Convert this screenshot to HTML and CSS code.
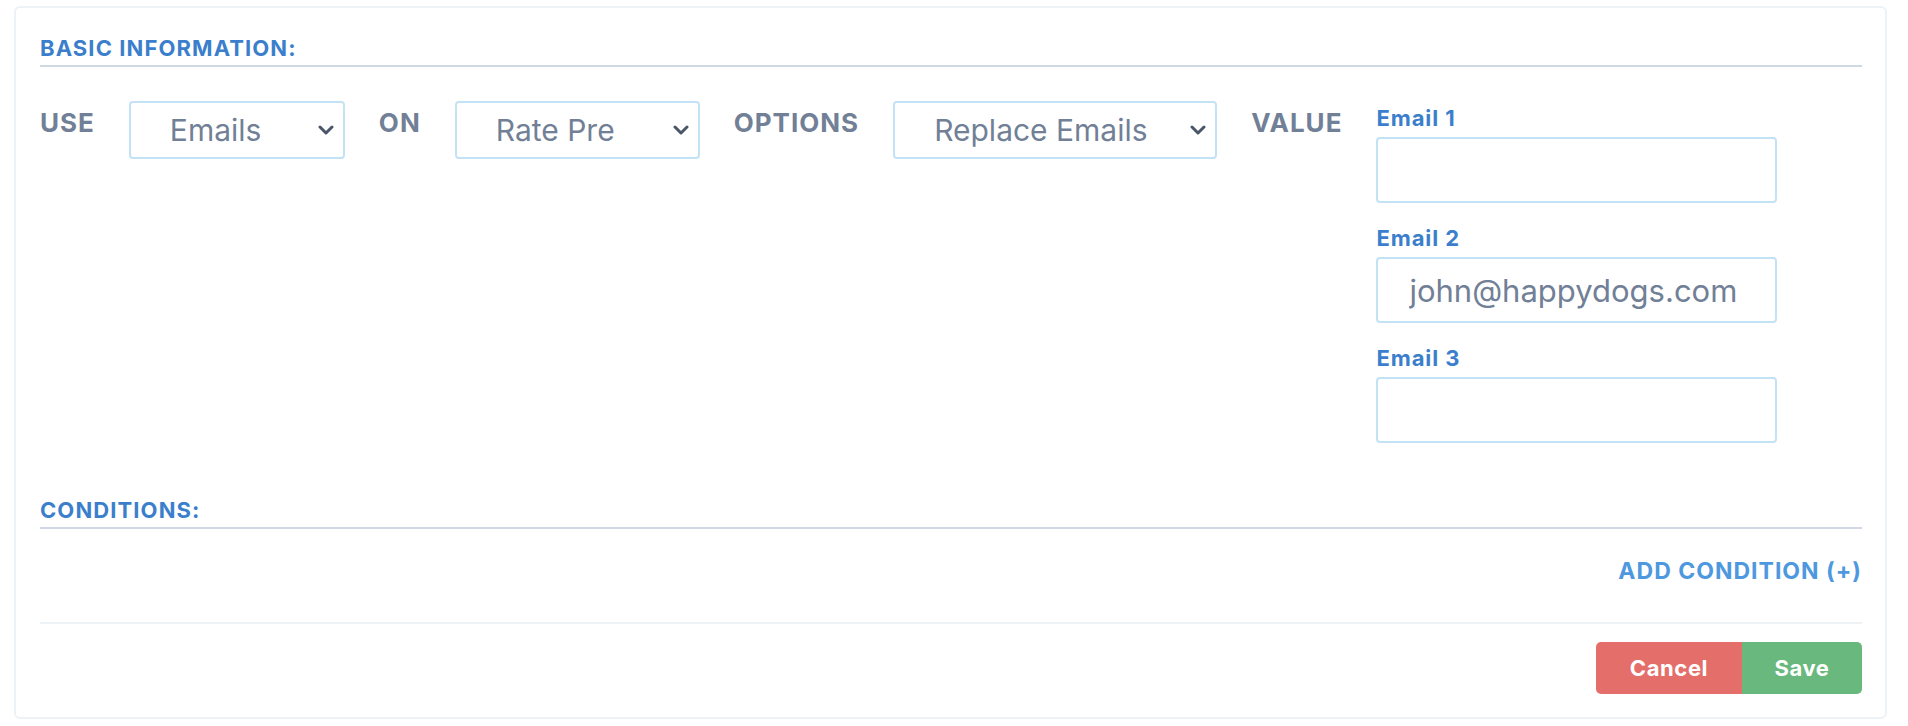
FILE: index.html
```html
<!DOCTYPE html>
<html lang="en">
<head>
<meta charset="utf-8">
<title>Rule editor</title>
<link rel="stylesheet" href="styles.css">
</head>
<body>
<div class="card">
  <div class="section-title">BASIC INFORMATION:</div>
  <div class="rule-row">
    <span class="field-label">USE</span>
    <div class="select select-use">
      <span>Emails</span>
      <svg class="chevron" width="16" height="10" viewBox="0 0 16 10"><polyline points="2,2 8,8 14,2" /></svg>
    </div>
    <span class="field-label">ON</span>
    <div class="select select-on">
      <span>Rate Pre</span>
      <svg class="chevron" width="16" height="10" viewBox="0 0 16 10"><polyline points="2,2 8,8 14,2" /></svg>
    </div>
    <span class="field-label">OPTIONS</span>
    <div class="select select-options">
      <span>Replace Emails</span>
      <svg class="chevron" width="16" height="10" viewBox="0 0 16 10"><polyline points="2,2 8,8 14,2" /></svg>
    </div>
    <span class="field-label">VALUE</span>
    <div class="emails">
      <div class="email-group">
        <label class="email-label">Email 1</label>
        <input class="email-input" type="text" value="">
      </div>
      <div class="email-group">
        <label class="email-label">Email 2</label>
        <input class="email-input" type="text" value="john@happydogs.com">
      </div>
      <div class="email-group">
        <label class="email-label">Email 3</label>
        <input class="email-input" type="text" value="">
      </div>
    </div>
  </div>
  <div class="section-title conditions">CONDITIONS:</div>
  <div class="add-row"><a class="add-link">ADD CONDITION (+)</a></div>
  <div class="footer">
    <button class="btn btn-cancel">Cancel</button>
    <button class="btn btn-save">Save</button>
  </div>
</div>
</body>
</html>
```

FILE: styles.css
```css
* { box-sizing: border-box; }

body {
  margin: 0;
  padding: 6px 21px 0 14px;
  background: #ffffff;
  font-family: Inter, "Noto Sans", sans-serif;
}

.card {
  border: 2px solid #edf2f7;
  border-radius: 6px;
  padding: 27px 23px 23px 24px;
  background: #fff;
}

.section-title {
  font-size: 22px;
  font-weight: 700;
  line-height: 26px;
  letter-spacing: 1.1px;
  color: #3b7fcc;
  padding-bottom: 4px;
  border-bottom: 2px solid #cfd8e3;
}

.section-title.conditions {
  margin-top: 54px;
}

.rule-row {
  display: flex;
  align-items: flex-start;
  gap: 34px;
  margin-top: 34px;
}

.field-label {
  font-size: 26px;
  font-weight: 700;
  line-height: 32px;
  letter-spacing: 1px;
  color: #718096;
  margin-top: 6px;
}

.select {
  height: 58px;
  border: 2px solid #c3e2f6;
  border-radius: 4px;
  display: flex;
  align-items: center;
  justify-content: space-between;
  padding: 0 9px 0 39px;
  font-size: 30px;
  color: #718096;
}

.select-use { width: 216px; }
.select-on { width: 245px; }
.select-options { width: 324px; }

.chevron polyline {
  fill: none;
  stroke: #4a5568;
  stroke-width: 3;
  stroke-linecap: round;
  stroke-linejoin: round;
}

.emails {
  width: 401px;
  margin-top: 4px;
  display: flex;
  flex-direction: column;
  gap: 22px;
}

.email-group {
  display: flex;
  flex-direction: column;
}

.email-label {
  font-size: 22px;
  font-weight: 700;
  line-height: 26px;
  letter-spacing: 0.9px;
  color: #3b7fcc;
  margin-bottom: 6px;
}

.email-input {
  height: 66px;
  width: 100%;
  border: 2px solid #c3e2f6;
  border-radius: 4px;
  padding: 0 0 0 31px;
  font-family: Inter, "Noto Sans", sans-serif;
  font-size: 31px;
  color: #718096;
  background: #fff;
  outline: none;
}

.add-row {
  margin-top: 29px;
  display: flex;
  justify-content: flex-end;
  padding-bottom: 38px;
  border-bottom: 2px solid #edf2f7;
}

.add-link {
  font-size: 23px;
  font-weight: 700;
  line-height: 26px;
  letter-spacing: 1px;
  color: #4e98e0;
}

.footer {
  display: flex;
  justify-content: flex-end;
  padding-top: 18px;
}

.btn {
  height: 52px;
  border: none;
  font-family: Inter, "Noto Sans", sans-serif;
  font-size: 22px;
  font-weight: 700;
  letter-spacing: 0.6px;
  color: #fff;
  padding: 0;
}

.btn-cancel {
  width: 146px;
  background: #e46e6a;
  border-radius: 5px 0 0 5px;
}

.btn-save {
  width: 120px;
  background: #69b87e;
  border-radius: 0 5px 5px 0;
}
```
